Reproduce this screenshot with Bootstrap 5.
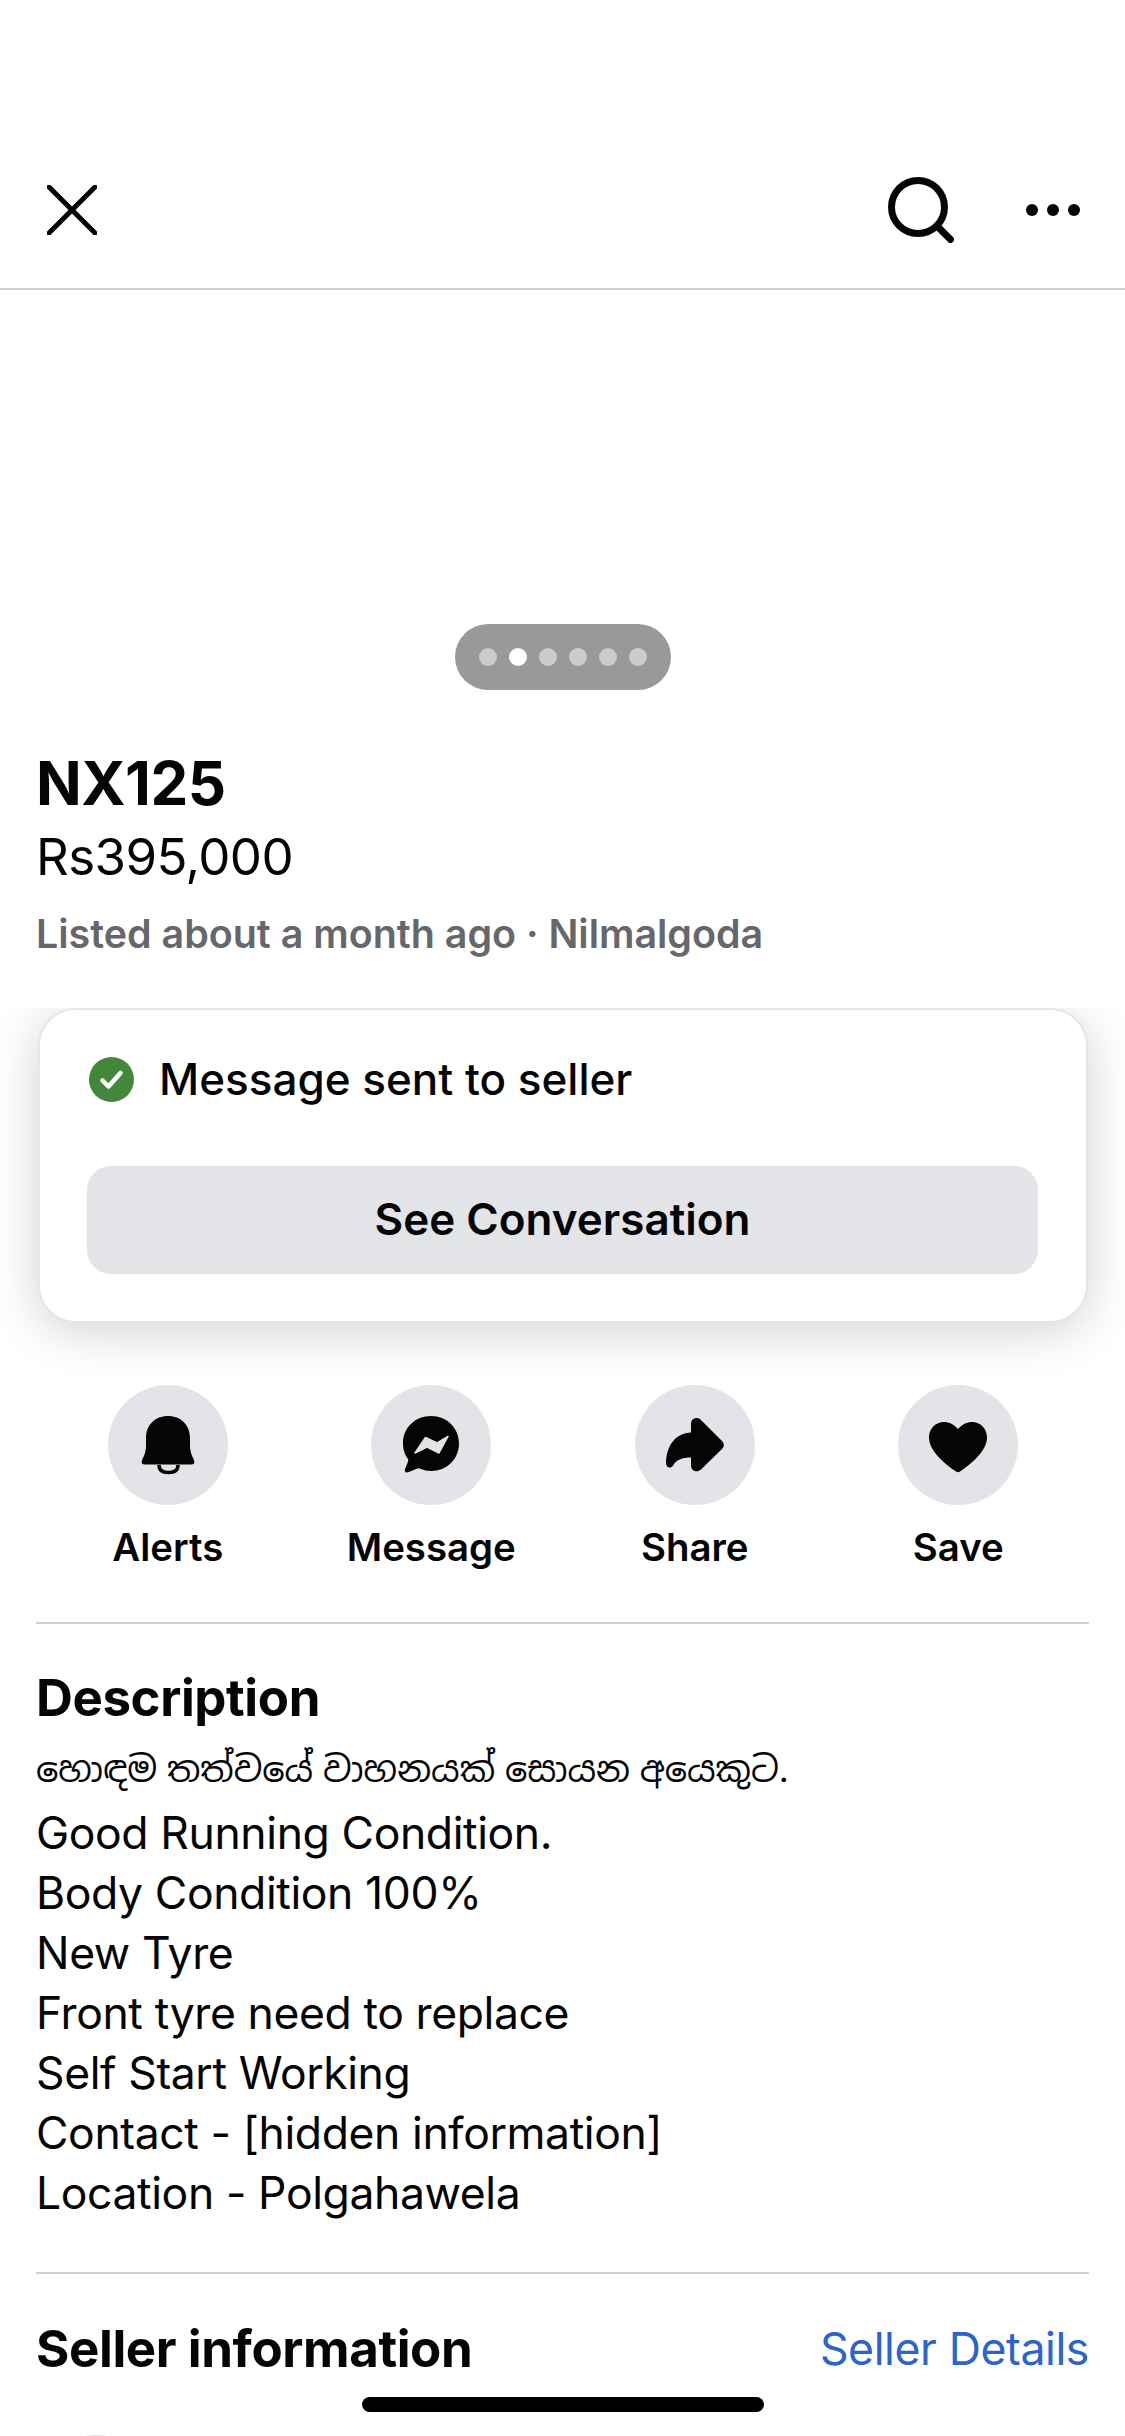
<!DOCTYPE html>
<html lang="en">
<head>
    <meta charset="UTF-8">
    <meta name="viewport" content="width=device-width, initial-scale=1.0">
    <title>NX125</title>
    <link href="https://cdn.jsdelivr.net/npm/bootstrap@5.3.3/dist/css/bootstrap.min.css" rel="stylesheet">
    <style>
        html, body {
            height: 2436px;
            overflow: hidden;
            background-color: #fff;
        }

        body {
            font-family: Inter, "Noto Sans", "Noto Sans Sinhala", "Liberation Sans", sans-serif;
            color: #050505;
        }

        .top-bar {
            height: 290px;
            padding: 0 45px 0 47px;
            border-bottom: 2px solid #d3d3d3;
        }

        .close-icon {
            margin-bottom: 53px;
        }

        .top-tools {
            gap: 72px;
            margin-bottom: 45px;
        }

        .photo-area {
            height: 400px;
        }

        .photo-dots {
            width: 216px;
            height: 66px;
            background-color: #999;
            gap: 12px;
        }

        .photo-dots span {
            width: 18px;
            height: 18px;
            border-radius: 50%;
            background-color: #ccc;
        }

        .photo-dots span.on {
            background-color: #fff;
        }

        .listing-head {
            position: relative;
            z-index: 2;
            height: 318px;
            padding: 58px 36px 0;
            background-color: #fff;
        }

        .listing-title {
            font-size: 60px;
            font-weight: 700;
            line-height: 70px;
            margin: 0;
            letter-spacing: -.5px;
        }

        .listing-price {
            font-size: 51px;
            line-height: 78px;
            letter-spacing: -.6px;
        }

        .listing-meta {
            font-size: 39.4px;
            font-weight: 600;
            line-height: 50px;
            margin-top: 13px;
            color: #65676b;
        }

        .sent-card {
            height: 315px;
            margin: 0 37px 0 38px;
            padding: 46px 48px 47px 47px;
            border: 2px solid #e4e6eb;
            border-radius: 38px;
            box-shadow: 0 8px 50px rgba(0, 0, 0, .18);
        }

        .sent-line {
            font-size: 44px;
            line-height: 46px;
            font-weight: 500;
            gap: 25px;
            padding-left: 2px;
            height: 46px;
        }

        .see-btn {
            height: 108px;
            margin-top: 64px;
            padding-bottom: 9px;
            background-color: #e3e4e8;
            border: 0;
            border-radius: 24px;
            font-size: 44px;
            font-weight: 600;
            color: #050505;
        }

        .action-row {
            padding: 62px 35px 0 36px;
        }

        .action-item {
            width: 25%;
        }

        .action-circle {
            width: 120px;
            height: 120px;
            background-color: #e3e4e8;
        }

        .action-label {
            font-size: 38.4px;
            font-weight: 600;
            line-height: 48px;
            margin-top: 18px;
        }

        .page-rule {
            height: 2px;
            margin: 0 36px;
            background-color: #ced0d4;
        }

        .page-rule.first-rule {
            margin-top: 51px;
        }

        .desc-block {
            padding: 43px 36px 0;
            height: 648px;
        }

        .block-title {
            font-size: 51px;
            font-weight: 700;
            line-height: 62px;
            margin: 0;
            letter-spacing: -.4px;
        }

        .desc-text {
            font-size: 44.5px;
            line-height: 60px;
            letter-spacing: -.4px;
        }

        .sinhala-line {
            font-size: 35.2px;
            line-height: 50px;
            margin-top: 15px;
            margin-bottom: 9px;
        }

        .seller-head {
            padding: 42px 36px 0;
        }

        .seller-link {
            font-size: 44.6px;
            color: #2a64cc;
            text-decoration: none;
            letter-spacing: -.4px;
        }

        .seller-avatar {
            width: 120px;
            height: 120px;
            margin: 52px 0 0 36px;
            background-color: #e3e4e8;
        }

        .home-bar {
            position: absolute;
            left: 362px;
            top: 2397px;
            width: 402px;
            height: 15px;
            border-radius: 8px;
            background-color: #000;
        }
    </style>
</head>
<body>
    <header class="top-bar d-flex align-items-end justify-content-between">
        <svg width="50" height="50" viewBox="0 0 50 50" class="close-icon flex-shrink-0">
            <path d="M2 2L48 48M48 2L2 48" stroke="#050505" stroke-width="5" stroke-linecap="round" fill="none"/>
        </svg>
        <div class="top-tools d-flex align-items-center">
            <svg width="66" height="66" viewBox="0 0 66 66">
                <circle cx="30" cy="30" r="26.500" stroke="#050505" stroke-width="7" fill="none"/>
                <path d="M49 49L62.500 62.500" stroke="#050505" stroke-width="7" stroke-linecap="round"/>
            </svg>
            <svg width="54" height="12" viewBox="0 0 54 12">
                <circle cx="6" cy="6" r="6" fill="#050505"/>
                <circle cx="27" cy="6" r="6" fill="#050505"/>
                <circle cx="48" cy="6" r="6" fill="#050505"/>
            </svg>
        </div>
    </header>

    <section class="photo-area d-flex justify-content-center align-items-end">
        <div class="photo-dots rounded-pill d-flex align-items-center justify-content-center">
            <span></span><span class="on"></span><span></span><span></span><span></span><span></span>
        </div>
    </section>

    <section class="listing-head">
        <h1 class="listing-title">NX125</h1>
        <div class="listing-price">Rs395,000</div>
        <div class="listing-meta">Listed about a month ago · Nilmalgoda</div>
    </section>

    <section class="sent-card bg-white">
        <div class="sent-line d-flex align-items-center">
            <svg width="45" height="45" viewBox="0 0 45 45">
                <circle cx="22.500" cy="22.500" r="22.500" fill="#42873b"/>
                <path d="M13.500 23.500L19.500 29.500L31.500 16" stroke="#fff" stroke-width="4.500" stroke-linecap="round" stroke-linejoin="round" fill="none"/>
            </svg>
            <span>Message sent to seller</span>
        </div>
        <button type="button" class="btn see-btn w-100">See Conversation</button>
    </section>

    <section class="action-row d-flex">
        <div class="action-item d-flex flex-column align-items-center">
            <div class="action-circle rounded-circle d-flex align-items-center justify-content-center">
                <svg width="60" height="60" viewBox="0 0 60 60">
                    <path d="M30 1C17 1 8 10 8 23V31C8 37 6 41 4 45C3 48 4 49.500 7 49.500H53C56 49.500 57 48 56 45C54 41 52 37 52 31V23C52 10 43 1 30 1Z" fill="#050505"/>
                    <path d="M21 50C21 56 25 57.500 30.500 57.500C36 57.500 40 56 40 50" stroke="#050505" stroke-width="3.500" fill="none"/>
                </svg>
            </div>
            <div class="action-label">Alerts</div>
        </div>
        <div class="action-item d-flex flex-column align-items-center">
            <div class="action-circle rounded-circle d-flex align-items-center justify-content-center">
                <svg width="60" height="60" viewBox="0 0 60 60">
                    <path d="M30 1C14 1 2 13 2 28C2 35 4 40 7 44C7.500 45 7 46 6.500 48L4 54C3 57 5 58 8 57L15 54C17 53 18 53 20 54C23 55 26 56 30 56C46 56 58 44 58 28.500C58 13 46 1 30 1Z" fill="#050505"/>
                    <path d="M14 38L24.500 22.500L36 28L47 21.500L38 38L26 32Z" fill="#e3e4e8" stroke="#e3e4e8" stroke-width="1.500" stroke-linejoin="round"/>
                </svg>
            </div>
            <div class="action-label">Message</div>
        </div>
        <div class="action-item d-flex flex-column align-items-center">
            <div class="action-circle rounded-circle d-flex align-items-center justify-content-center">
                <svg width="60" height="60" viewBox="0 0 60 60">
                    <path d="M26 9C26 3.500 32 1 36 5L57 26C59.500 28.500 59.500 31.500 57 34L36 54.500C32 58 26 56 26 50.500V42.500C17 42.500 11 45 8 50.500C6 54 1 53 1 48C1.500 30 11 18 26 17.500Z" fill="#050505"/>
                </svg>
            </div>
            <div class="action-label">Share</div>
        </div>
        <div class="action-item d-flex flex-column align-items-center">
            <div class="action-circle rounded-circle d-flex align-items-center justify-content-center">
                <svg width="60" height="60" viewBox="0 0 60 60">
                    <path d="M30 14C26 9.500 21 7 16 7C7.500 7 1 13.500 1 22.500C1 36 17 49 28 56.500C29.500 57.500 30.500 57.500 32 56.500C43 49 59 36 59 22.500C59 13.500 52.500 7 44 7C39 7 34 9.500 30 14Z" fill="#050505"/>
                </svg>
            </div>
            <div class="action-label">Save</div>
        </div>
    </section>

    <div class="page-rule first-rule"></div>

    <section class="desc-block">
        <h2 class="block-title">Description</h2>
        <div class="sinhala-line">හොඳම තත්වයේ වාහනයක් සොයන අයෙකුට.</div>
        <div class="desc-text">Good Running Condition.</div>
        <div class="desc-text">Body Condition 100%</div>
        <div class="desc-text">New Tyre</div>
        <div class="desc-text">Front tyre need to replace</div>
        <div class="desc-text">Self Start Working</div>
        <div class="desc-text">Contact - [hidden information]</div>
        <div class="desc-text">Location - Polgahawela</div>
    </section>

    <div class="page-rule"></div>

    <section class="seller-head d-flex justify-content-between align-items-center">
        <h2 class="block-title">Seller information</h2>
        <a href="#" class="seller-link">Seller Details</a>
    </section>
    <div class="seller-avatar rounded-circle"></div>

    <div class="home-bar"></div>
    <script src="https://cdn.jsdelivr.net/npm/bootstrap@5.3.3/dist/js/bootstrap.bundle.min.js"></script>
</body>
</html>
